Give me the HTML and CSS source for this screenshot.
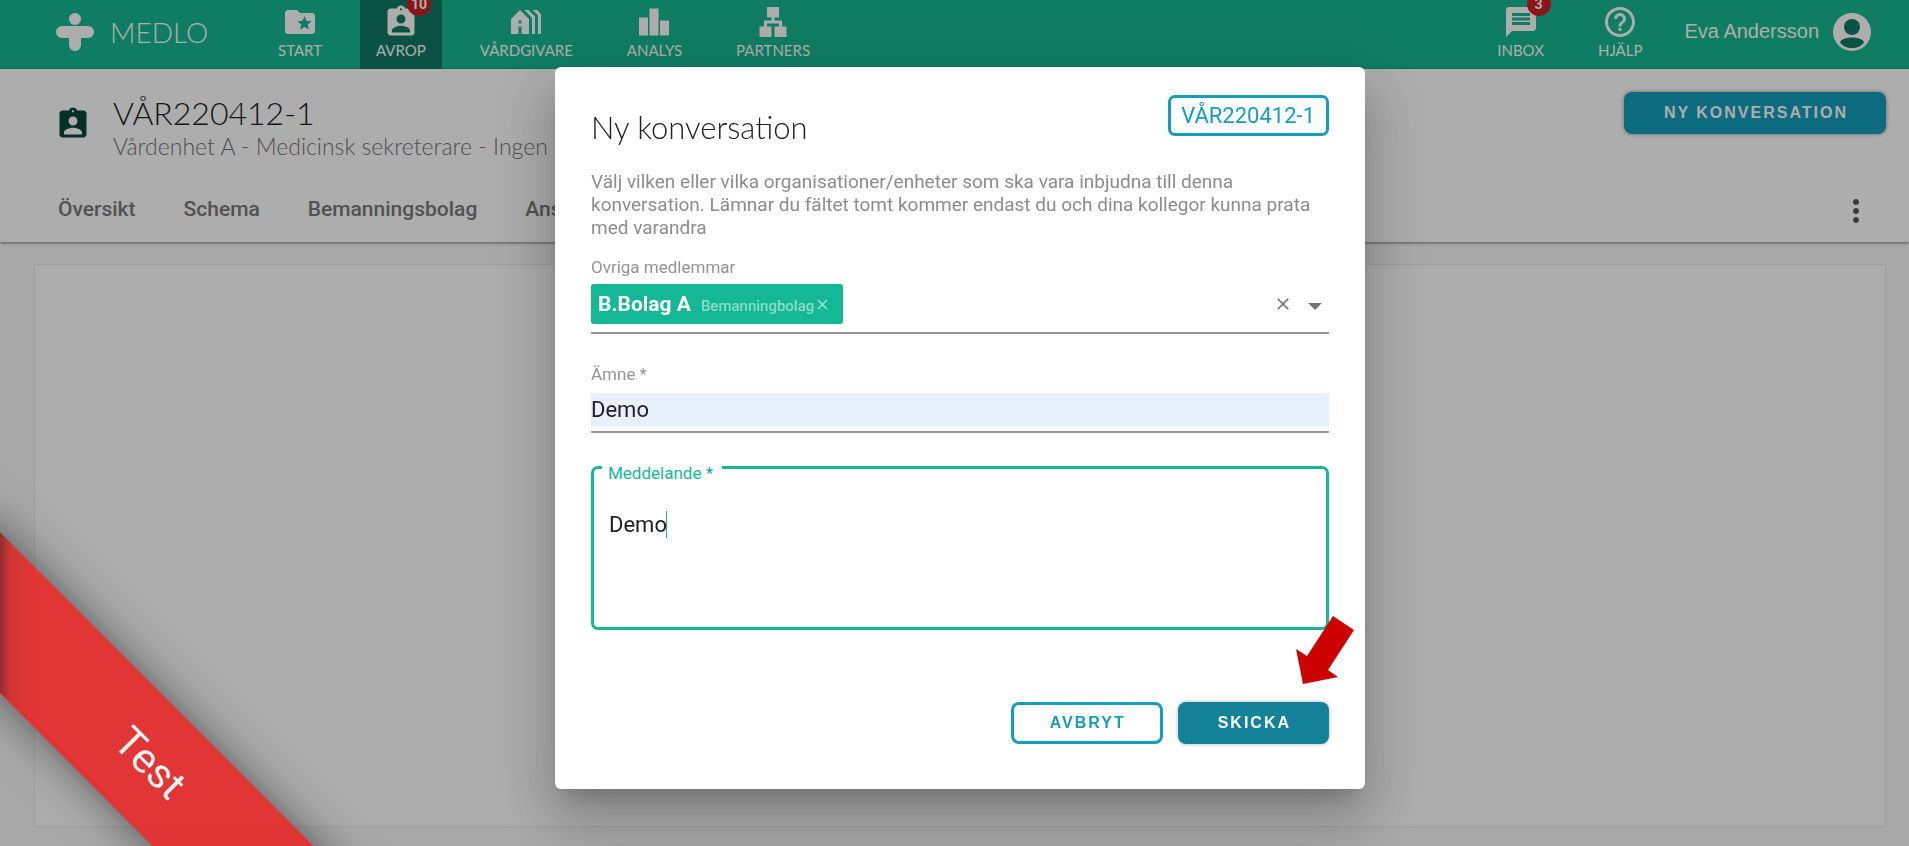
FILE: index.html
```html
<!DOCTYPE html>
<html lang="sv">

<head>
    <meta charset="UTF-8">
    <title>Medlo</title>
    <link rel="stylesheet" href="styles.css">
</head>

<body>
    <!-- icons -->
    <svg class="sprite">
        <symbol id="i-assignment" viewBox="0 0 24 24">
            <path d="M19 3h-4.18C14.4 1.84 13.3 1 12 1s-2.4.84-2.82 2H5c-1.1 0-2 .9-2 2v14c0 1.1.9 2 2 2h14c1.1 0 2-.9 2-2V5c0-1.1-.9-2-2-2zm-7-.25c.41 0 .75.34.75.75s-.34.75-.75.75-.75-.34-.75-.75.34-.75.75-.75zM12 7c1.66 0 3 1.34 3 3s-1.34 3-3 3-3-1.34-3-3 1.34-3 3-3zm6 12H6v-1.4c0-2 4-3.1 6-3.1s6 1.1 6 3.1V19z" />
        </symbol>
        <symbol id="i-close" viewBox="0 0 24 24">
            <path d="M19 6.41L17.59 5 12 10.59 6.41 5 5 6.41 10.59 12 5 17.59 6.41 19 12 13.41 17.59 19 19 17.59 13.41 12z" />
        </symbol>
    </svg>

    <header class="topbar">
        <a class="logo" href="#">
            <svg width="38" height="38" viewBox="0 0 38 38">
                <circle cx="19" cy="6" r="6" />
                <rect x="0" y="13" width="38" height="12" rx="6" />
                <rect x="13" y="14" width="12" height="24" rx="6" />
            </svg>
            MEDLO
        </a>
        <nav class="menu">
            <a href="#">
                <svg viewBox="0 0 24 24"><path d="M20 6h-8l-2-2H4c-1.100 0-1.990.9-1.990 2L2 18c0 1.100.9 2 2 2h16c1.100 0 2-.9 2-2V8c0-1.100-.9-2-2-2zm-2.060 11L15 15.280 12.060 17l.78-3.330-2.590-2.240 3.410-.29L15 8l1.340 3.140 3.410.29-2.590 2.240.78 3.330z" /></svg>
                START
            </a>
            <a class="active" href="#">
                <svg><use href="#i-assignment" /></svg>
                AVROP
                <span class="count">10</span>
            </a>
            <a href="#">
                <svg viewBox="0 0 24 24"><path fill-rule="evenodd" d="M8 4l-6 6v10h5v-5h2v5h5V10zM9 13H7v-2h2zM18 20V8.350L13.650 4h-2.830L16 9.180V20zM22 20V6.690L19.310 4h-2.830L20 7.520V20z" /></svg>
                VÅRDGIVARE
            </a>
            <a href="#">
                <svg viewBox="0 0 24 24"><path d="M2 9h6v12H2zM9 3h6v18H9zM16 11h6v10h-6z" /></svg>
                ANALYS
            </a>
            <a href="#">
                <svg viewBox="0 0 24 24"><path d="M13 22h8v-7h-3v-4h-5V9h3V2H8v7h3v2H6v4H3v7h8v-7H8v-2h8v2h-3z" /></svg>
                PARTNERS
            </a>
        </nav>
        <nav class="menu menu-right">
            <a href="#">
                <svg viewBox="0 0 24 24"><path d="M20 2H4c-1.100 0-1.990.9-1.990 2L2 22l4-4h14c1.100 0 2-.9 2-2V4c0-1.100-.9-2-2-2zM6 6h12v2H6zm0 3h12v2H6zm0 3h12v2H6z" /></svg>
                INBOX
                <span class="count">3</span>
            </a>
            <a href="#">
                <svg viewBox="0 0 24 24"><path d="M11 18h2v-2h-2v2zm1-16C6.480 2 2 6.480 2 12s4.480 10 10 10 10-4.480 10-10S17.520 2 12 2zm0 18c-4.410 0-8-3.590-8-8s3.590-8 8-8 8 3.590 8 8-3.590 8-8 8zm0-14c-2.210 0-4 1.790-4 4h2c0-1.100.9-2 2-2s2 .9 2 2c0 2-3 1.750-3 5h2c0-2.250 3-2.500 3-5 0-2.210-1.790-4-4-4z" /></svg>
                HJÄLP
            </a>
        </nav>
        <a class="user" href="#">
            Eva Andersson
            <svg width="38" height="38" viewBox="0 0 38 38">
                <circle cx="19" cy="19" r="19" fill="#fff" />
                <circle cx="19" cy="14" r="8" fill="#0e7a65" />
                <path d="M7 29c3-6 21-6 24 0c-4 8-20 8-24 0z" fill="#0e7a65" />
            </svg>
        </a>
    </header>

    <section class="page-head">
        <div class="head-row">
            <svg class="head-icon"><use href="#i-assignment" /></svg>
            <div class="head-text">
                <h1>VÅR220412-1</h1>
                <p>Vårdenhet A - Medicinsk sekreterare - Ingen</p>
            </div>
            <button class="btn btn-blue">NY KONVERSATION</button>
        </div>
        <div class="tab-row">
            <nav class="tabs">
                <a href="#">Översikt</a>
                <a href="#">Schema</a>
                <a href="#">Bemanningsbolag</a>
                <a href="#">Ans</a>
            </nav>
            <button class="more" aria-label="Mer">
                <svg width="36" height="36" viewBox="0 0 24 24"><path d="M12 8c1.100 0 2-.9 2-2s-.9-2-2-2-2 .9-2 2 .9 2 2 2zm0 2c-1.100 0-2 .9-2 2s.9 2 2 2 2-.9 2-2-.9-2-2-2zm0 6c-1.100 0-2 .9-2 2s.9 2 2 2 2-.9 2-2-.9-2-2-2z" /></svg>
            </button>
        </div>
    </section>

    <main class="panel"></main>

    <div class="overlay">
        <form class="modal">
            <div class="modal-head">
                <h2>Ny konversation</h2>
                <span class="tag">VÅR220412-1</span>
            </div>
            <p class="intro">Välj vilken eller vilka organisationer/enheter som ska vara inbjudna till denna konversation. Lämnar du fältet tomt kommer endast du och dina kollegor kunna prata med varandra</p>

            <label class="label" for="members">Ovriga medlemmar</label>
            <div class="select">
                <span class="chip">
                    <b>B.Bolag A</b>
                    <small>Bemanningbolag</small>
                    <button type="button" aria-label="Ta bort"><svg width="17" height="17"><use href="#i-close" /></svg></button>
                </span>
                <input id="members" type="text">
                <button type="button" class="clear" aria-label="Rensa"><svg width="20" height="20"><use href="#i-close" /></svg></button>
                <button type="button" class="arrow-down" aria-label="Visa"><svg width="14" height="7" viewBox="0 0 14 7"><path d="M0 0h14l-7 7z" /></svg></button>
            </div>

            <label class="label label-subject" for="subject">Ämne *</label>
            <div class="line-field">
                <input id="subject" type="text" value="Demo">
            </div>

            <div class="outline-field">
                <label for="message">Meddelande <span>*</span></label>
                <textarea id="message">Demo</textarea>
                <i class="caret"></i>
            </div>

            <div class="actions">
                <button type="button" class="btn btn-line">AVBRYT</button>
                <button type="button" class="btn btn-send">SKICKA</button>
            </div>

            <svg class="pointer" width="58" height="68" viewBox="0 0 58 68">
                <path d="M37 0L58 14L32 54L42 61L7 68L0 33L11 40z" />
            </svg>
        </form>
    </div>

    <div class="corner">
        <div class="ribbon">Test</div>
    </div>
</body>

</html>
```
FILE: styles.css
```css
* {
    box-sizing: border-box;
    margin: 0;
    padding: 0;
}

body {
    display: flex;
    flex-direction: column;
    height: 100vh;
    overflow: hidden;
    background: #f9f9f9;
    font-family: Roboto, sans-serif;
    color: #212121;
}

a {
    color: inherit;
    text-decoration: none;
}

button {
    border: 0;
    background: none;
    cursor: pointer;
}

input,
textarea {
    border: 0;
    outline: 0;
    background: none;
    font-family: Roboto, sans-serif;
    font-size: 22px;
    color: #212121;
}

svg {
    display: block;
    fill: currentColor;
}

.sprite {
    position: absolute;
    width: 0;
    height: 0;
}

/* top bar */

.topbar {
    display: flex;
    height: 69px;
    flex-shrink: 0;
    padding: 0 38px 0 56px;
    background: #16b893;
    color: #fff;
    font-family: Lato, sans-serif;
}

.logo {
    display: flex;
    align-items: center;
    width: 206px;
    gap: 16px;
    padding-bottom: 6px;
    font-size: 28px;
    font-weight: 300;
}

.menu {
    display: flex;
    gap: 22px;
}

.menu a {
    position: relative;
    display: flex;
    flex-direction: column;
    align-items: center;
    padding: 4px 16px 0;
    font-size: 15px;
    line-height: 21px;
}

.menu svg {
    width: 36px;
    height: 36px;
}

.menu .active {
    background: #0e7a65;
}

.count {
    position: absolute;
    top: -8px;
    left: 50%;
    width: 24px;
    height: 24px;
    margin-left: 6px;
    border-radius: 12px;
    background: #cb2026;
    font: bold 14px/24px Roboto, sans-serif;
    text-align: center;
}

.menu-right {
    margin-left: auto;
}

.user {
    display: flex;
    align-items: center;
    gap: 14px;
    margin-left: 26px;
    padding-bottom: 6px;
    font-family: "Liberation Sans", sans-serif;
    font-size: 20px;
}

/* page head */

.page-head {
    height: 173px;
    flex-shrink: 0;
    background: #fff;
    box-shadow: 0 1px 3px rgba(0, 0, 0, .5);
}

.head-row {
    display: flex;
    align-items: flex-start;
    padding: 23px 23px 0 55px;
}

.head-icon {
    width: 36px;
    height: 36px;
    margin-top: 14px;
    fill: #07483c;
}

.head-text {
    flex: 1;
    padding-left: 22px;
    font-family: Lato, sans-serif;
    font-weight: 300;
}

.head-text h1 {
    font-size: 32px;
    font-weight: 300;
    line-height: 42px;
}

.head-text p {
    font-size: 23px;
    line-height: 24px;
    color: #757575;
}

.btn {
    height: 42px;
    padding: 0 38px 0 40px;
    border-radius: 8px;
    font-family: "Liberation Sans", sans-serif;
    font-size: 16px;
    font-weight: bold;
    letter-spacing: 2px;
}

.btn-blue {
    background: #149ebb;
    color: #fff;
    box-shadow: 0 0 4px rgba(0, 0, 0, .4);
}

.tab-row {
    display: flex;
    justify-content: space-between;
    padding: 31px 35px 0 34px;
}

.tabs {
    display: flex;
}

.tabs a {
    padding: 0 24px;
    font-size: 21px;
    font-weight: 500;
    line-height: 40px;
    color: #797979;
}

.more {
    align-self: flex-end;
    color: #555;
}

.panel {
    flex: 1;
    margin: 22px 23px 19px 34px;
    border: 1px solid #eaeaea;
    background: #fff;
}

/* modal */

.overlay {
    position: fixed;
    inset: 0;
    display: flex;
    align-items: center;
    justify-content: center;
    padding: 10px 0 0 11px;
    background: rgba(0, 0, 0, .32);
}

.modal {
    position: relative;
    width: 810px;
    padding: 28px 36px 45px;
    border-radius: 6px;
    background: #fff;
    box-shadow: 0 16px 22px -10px rgba(0, 0, 0, .2), 0 36px 57px 4px rgba(0, 0, 0, .14), 0 14px 69px 12px rgba(0, 0, 0, .12);
}

.modal-head {
    display: flex;
    align-items: flex-start;
    justify-content: space-between;
}

.modal-head h2 {
    padding-top: 12px;
    font-family: Lato, sans-serif;
    font-size: 31px;
    font-weight: 300;
    line-height: 40px;
}

.tag {
    padding: 0 11px 0 10px;
    border: 3px solid #149ebb;
    border-radius: 7px;
    font-size: 22px;
    line-height: 35px;
    color: #149ebb;
}

.intro {
    margin: 23px 0 18px;
    font-size: 19px;
    line-height: 23px;
    color: #8c8c8c;
}

.label {
    display: block;
    font-size: 17px;
    line-height: 20px;
    color: #949494;
}

.select {
    display: flex;
    align-items: center;
    margin-top: 7px;
    padding-bottom: 8px;
    border-bottom: 2px solid #949494;
}

.select input {
    flex: 1;
    min-width: 0;
}

.chip {
    display: flex;
    align-items: center;
    height: 40px;
    padding: 0 12px 0 7px;
    border-radius: 3px;
    background: #15b896;
    color: #fff;
}

.chip b {
    font-size: 21px;
}

.chip small {
    padding: 4px 0 0 10px;
    font-size: 15px;
    font-weight: 500;
    opacity: .5;
}

.chip button {
    color: #a5e4d6;
}

.clear,
.arrow-down {
    color: #757575;
}

.arrow-down {
    margin: 4px 7px 0 15px;
}

.label-subject {
    margin-top: 30px;
}

.line-field {
    margin-top: 9px;
    padding-bottom: 4px;
    border-bottom: 2px solid #949494;
}

.line-field input {
    display: block;
    width: 100%;
    height: 34px;
    padding-bottom: 2px;
    background: #e8f0fe;
}

.outline-field {
    position: relative;
    height: 164px;
    margin-top: 33px;
    padding: 41px 15px 0;
    border: 3px solid #15b896;
    border-radius: 7px;
}

.outline-field label {
    position: absolute;
    top: -6px;
    left: 8px;
    padding: 0 9px 0 6px;
    background: #fff;
    font-size: 17px;
    line-height: 20px;
    color: #15b896;
}

.outline-field label span {
    color: #149ebb;
}

.outline-field textarea {
    display: block;
    width: 100%;
    height: 110px;
    line-height: 30px;
    resize: none;
}

.caret {
    position: absolute;
    top: 42px;
    left: 72px;
    width: 1px;
    height: 27px;
    background: #15b896;
}

.actions {
    display: flex;
    justify-content: flex-end;
    gap: 15px;
    margin-top: 72px;
}

.btn-line {
    padding: 0 34px 0 36px;
    border: 3px solid #149ebb;
    color: #149ebb;
}

.btn-send {
    background: #14839a;
    color: #fff;
    box-shadow: 0 0 4px rgba(0, 0, 0, .3);
}

.pointer {
    position: absolute;
    right: 11px;
    bottom: 105px;
    fill: #c00;
}

/* corner ribbon */

.corner {
    position: fixed;
    left: 0;
    bottom: 0;
    width: 400px;
    height: 400px;
    overflow: hidden;
}

.ribbon {
    position: absolute;
    left: -150px;
    bottom: 26px;
    width: 600px;
    height: 114px;
    transform: rotate(45deg);
    background: rgba(227, 50, 50, .97);
    box-shadow: 0 0 45px rgba(0, 0, 0, .5);
    color: #f0f0f0;
    font-size: 42px;
    line-height: 114px;
    text-align: center;
}

.corner::after {
    content: "";
    position: absolute;
    left: 0;
    bottom: 0;
    width: 35px;
    height: 314px;
    background: linear-gradient(to right, rgba(30, 40, 40, .4), rgba(30, 40, 40, .08) 11px, transparent);
    clip-path: polygon(0 0, 35px 35px, 35px 195px, 0 160px);
}
```
